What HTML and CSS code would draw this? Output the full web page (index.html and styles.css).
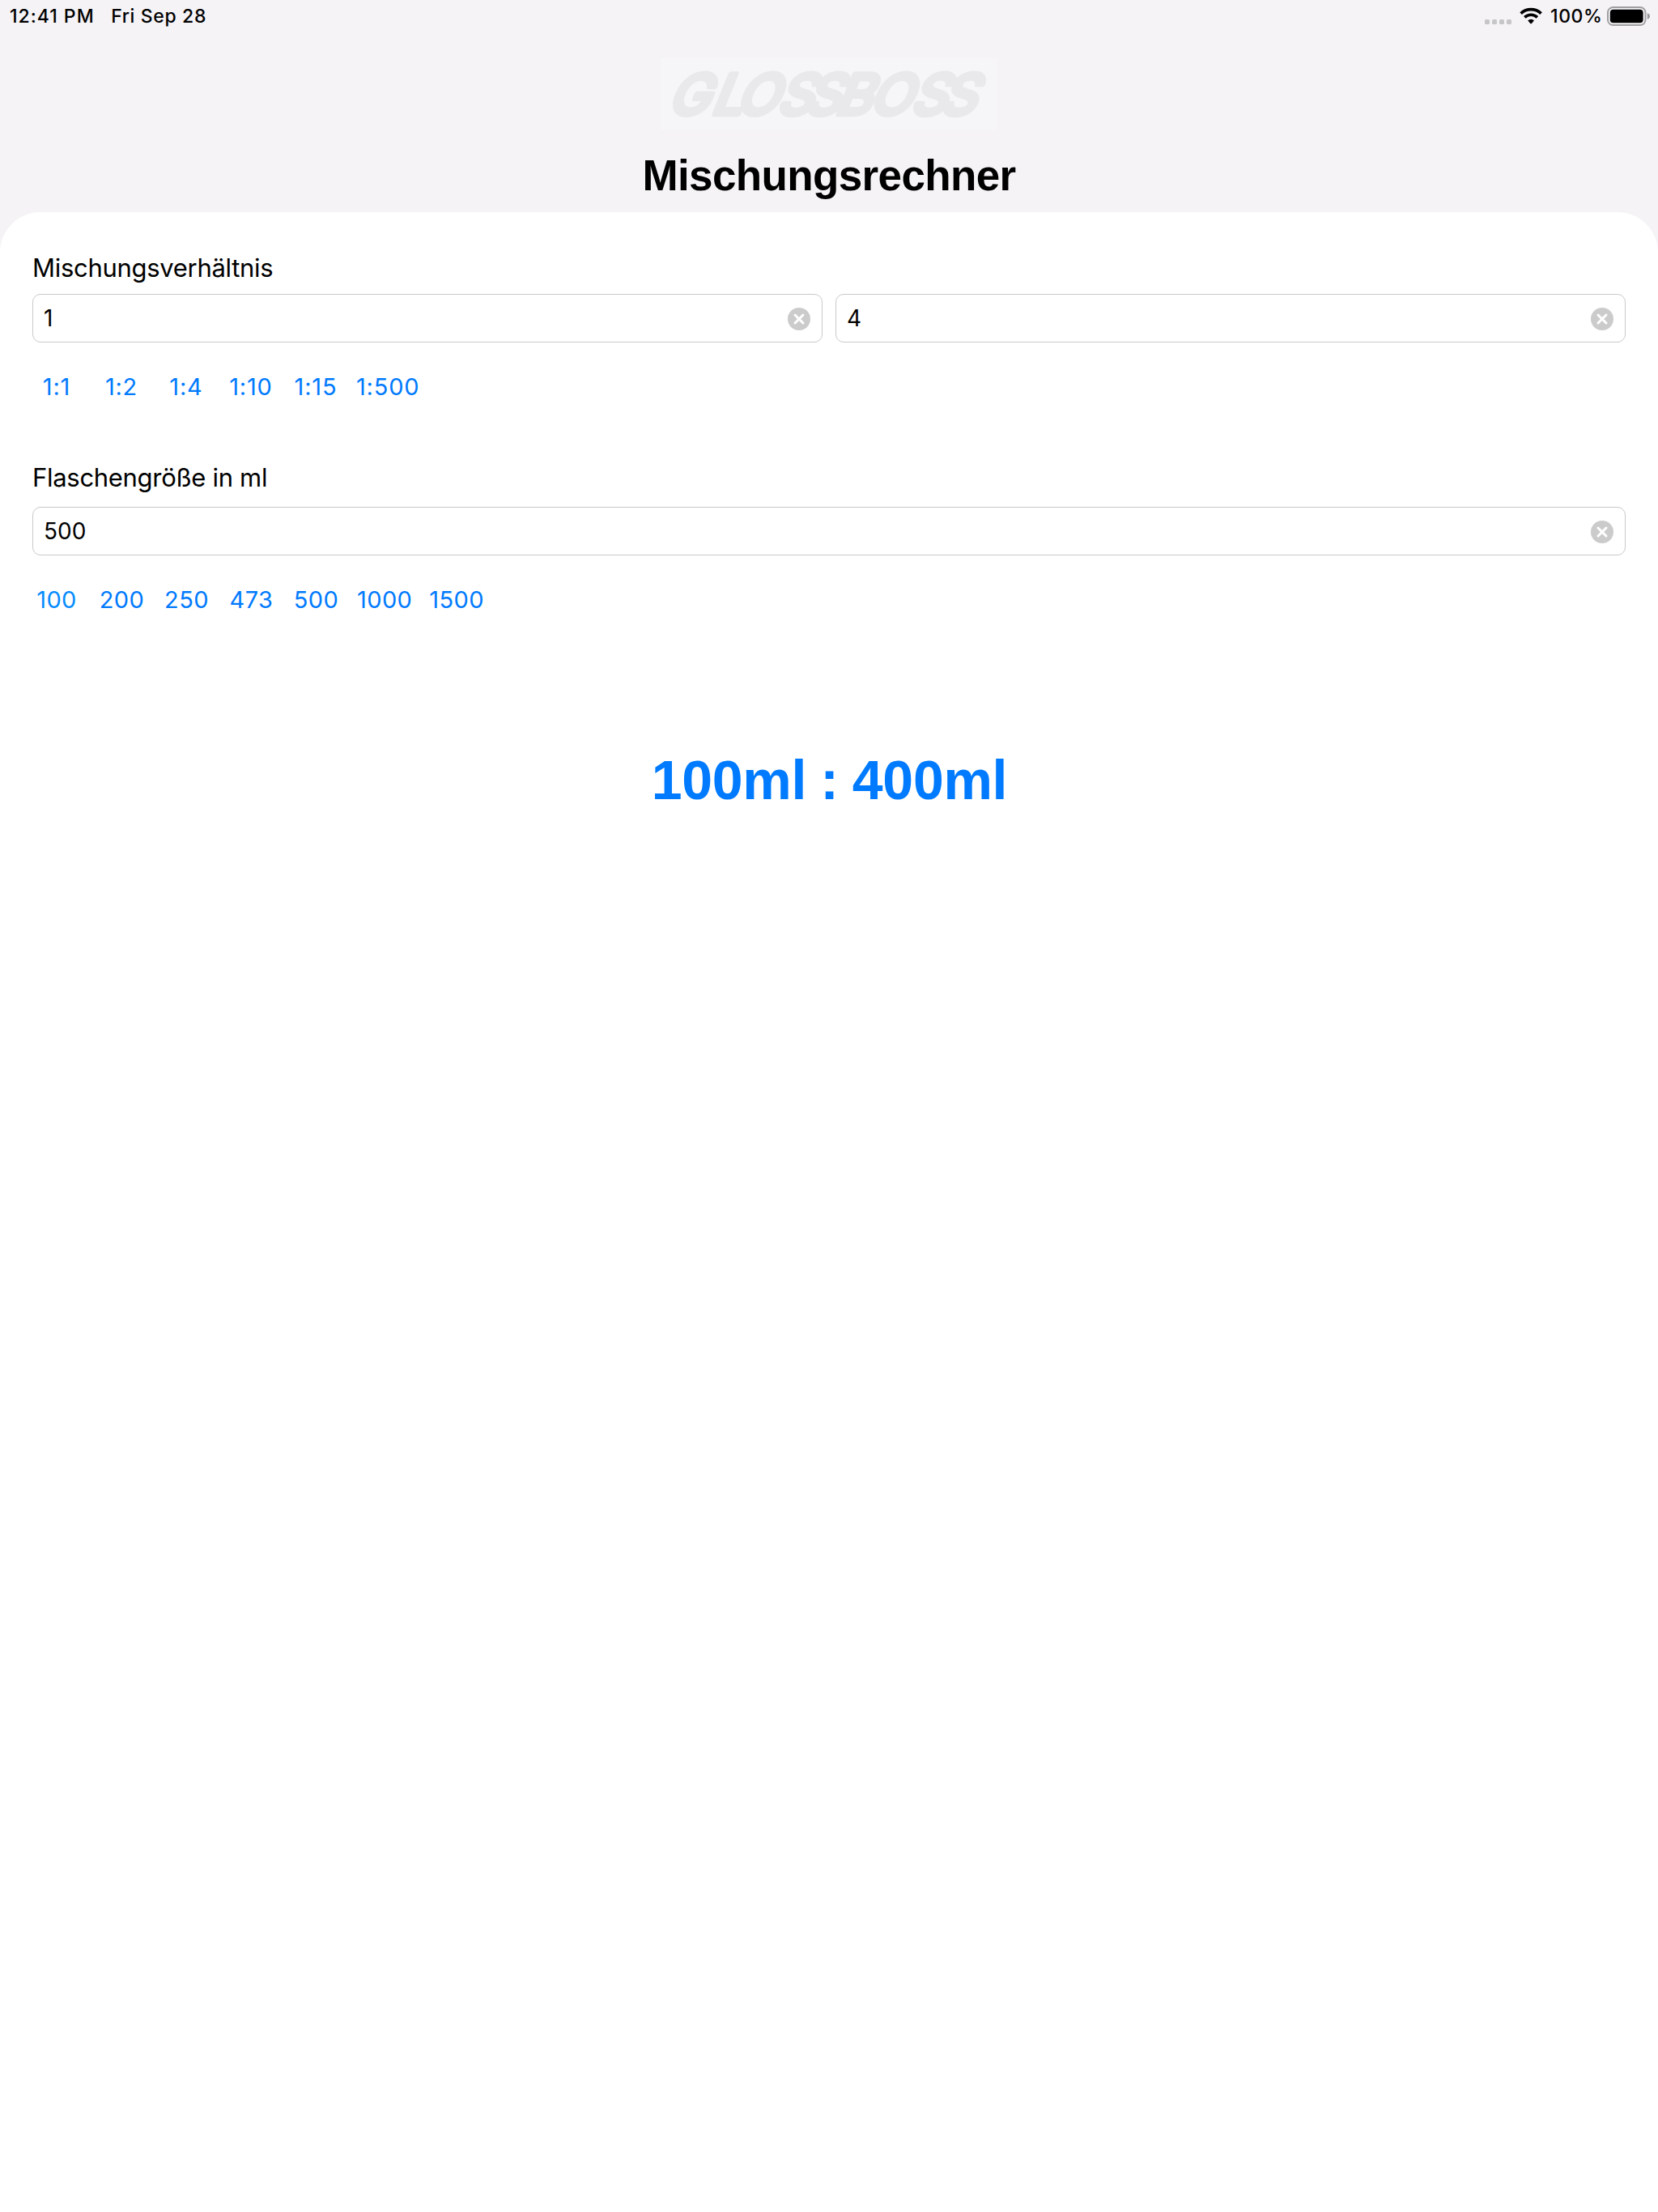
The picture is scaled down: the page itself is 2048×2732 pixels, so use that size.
FILE: index.html
```html
<!DOCTYPE html>
<html lang="de">
<head>
<meta charset="utf-8">
<title>Mischungsrechner</title>
<link rel="stylesheet" href="styles.css">
</head>
<body>
<header class="header">
  <div class="status">
    <span class="status-time">12:41 PM</span>
    <span class="status-date">Fri Sep 28</span>
    <div class="status-right">
      <svg class="signal" viewBox="0 0 71 24" width="71" height="24">
        <g fill="#c6c5c8"><rect x="0" y="16" width="6" height="6" rx="1.500"/><rect x="9" y="16" width="6" height="6" rx="1.500"/><rect x="18" y="16" width="6" height="6" rx="1.500"/><rect x="27" y="16" width="6" height="6" rx="1.500"/></g>
        <g fill="none" stroke="#000" stroke-width="3.7"><path d="M44.600 8.600A18.200 18.200 0 0 1 69.600 8.600"/><path d="M49.300 13.300A11.500 11.500 0 0 1 64.900 13.300"/></g>
        <path d="M53.200 17.300A5.600 5.600 0 0 1 61 17.300L57.900 20.900Q57.100 21.700 56.300 20.900Z"/>
      </svg>
      <span class="status-charge">100%</span>
      <svg class="battery" viewBox="0 0 54 24" width="54" height="24">
        <rect x="1" y="1" width="46.500" height="22" rx="6.500" fill="none" stroke="#a09fa2" stroke-width="2"/>
        <rect x="3.800" y="3.800" width="40.800" height="16.400" rx="4"/>
        <path d="M49.800 8.200Q53 9.300 53 12T49.800 15.800Z" fill="#99989b"/>
      </svg>
    </div>
  </div>
  <svg class="logo" viewBox="0 0 1248 264" role="img" aria-label="Glossboss">
    <text class="logo-text" transform="translate(-108 206) skewX(-22)" x="130 290 382 535 638 750 876 1030 1139">GLOSSBOSS</text>
  </svg>
  <h1 class="title">Mischungsrechner</h1>
</header>
<main class="panel">
  <section class="group">
    <h2 class="label">Mischungsverhältnis</h2>
    <div class="fields">
      <div class="field"><span>1</span><svg class="clear" viewBox="0 0 28 28"><circle cx="14" cy="14" r="14"/><path d="M9 9L19 19M19 9L9 19"/></svg></div>
      <div class="field"><span>4</span><svg class="clear" viewBox="0 0 28 28"><circle cx="14" cy="14" r="14"/><path d="M9 9L19 19M19 9L9 19"/></svg></div>
    </div>
    <div class="presets ratios"><a>1:1</a><a>1:2</a><a>1:4</a><a>1:10</a><a>1:15</a><a>1:500</a></div>
  </section>
  <section class="group sizes">
    <h2 class="label">Flaschengröße in ml</h2>
    <div class="fields">
      <div class="field"><span>500</span><svg class="clear" viewBox="0 0 28 28"><circle cx="14" cy="14" r="14"/><path d="M9 9L19 19M19 9L9 19"/></svg></div>
    </div>
    <div class="presets"><a class="fading">100</a><a>200</a><a>250</a><a>473</a><a>500</a><a>1000</a><a>1500</a></div>
  </section>
  <p class="result">100ml : 400ml</p>
</main>
</body>
</html>
```
FILE: styles.css
```css
* { box-sizing: border-box; margin: 0; padding: 0; }
body {
  min-height: 2732px;
  display: flex;
  flex-direction: column;
  background: #f5f3f6;
  color: #000;
  font-family: Inter, "Liberation Sans", sans-serif;
}
.header { height: 262px; display: flex; flex-direction: column; align-items: center; }
.status {
  width: 100%;
  height: 40px;
  padding: 0 9px 0 12px;
  display: flex;
  align-items: center;
  font-size: 23px;
  font-weight: 500;
  line-height: 40px;
}
.status-time { letter-spacing: 1px; margin-right: 20.5px; }
.status-date { letter-spacing: 0.65px; }
.status-right { margin-left: auto; display: flex; align-items: center; }
.status-charge { margin: 0 5.5px 0 10px; letter-spacing: 0.6px; }
.logo { width: 416px; height: 88px; margin-top: 32px; background: #f6f6f9; overflow: visible; }
.logo-text {
  font: 400 204px Inter, sans-serif;
  fill: #e9e9eb;
  stroke: #e9e9eb;
  stroke-width: 20px;
  stroke-linejoin: round;
}
.title {
  margin-top: 27px;
  font: bold 53px/60px "Liberation Sans", sans-serif;
  letter-spacing: -0.63px;
}
.panel {
  flex: 1;
  padding: 49px 40px 0;
  background: #fff;
  border-radius: 50px 50px 0 0;
}
.sizes { margin-top: 72px; }
.label { font-size: 31px; font-weight: 400; line-height: 40px; letter-spacing: -0.3px; }
.fields { display: flex; gap: 16px; margin-top: 12px; }
.sizes .fields { margin-top: 16px; }
.field {
  flex: 1;
  height: 60px;
  padding: 0 14px 0 13px;
  display: flex;
  align-items: center;
  justify-content: space-between;
  border: 1px solid #c9c9c9;
  border-radius: 10px;
  font-size: 28px;
}
.field span { line-height: 40px; padding-bottom: 1px; }
.clear { width: 28px; height: 28px; margin-top: 2px; fill: #cbcbcb; }
.clear path { stroke: #fff; stroke-width: 3; stroke-linecap: round; }
.presets {
  display: flex;
  gap: 20px;
  margin-top: 35px;
  color: #007aff;
  font-size: 29px;
  line-height: 40px;
  letter-spacing: 0.4px;
}
.ratios { letter-spacing: 0.8px; }
.presets a { min-width: 60px; text-align: center; }
.presets:not(.ratios) a:nth-child(n+2) { padding-left: 1px; }
.fading { color: #068bff; }
.result {
  margin-top: 162px;
  padding-left: 1px;
  text-align: center;
  color: #007aff;
  font: bold 68px/80px "Liberation Sans", sans-serif;
  letter-spacing: -0.3px;
  word-spacing: -1.4px;
}
```
